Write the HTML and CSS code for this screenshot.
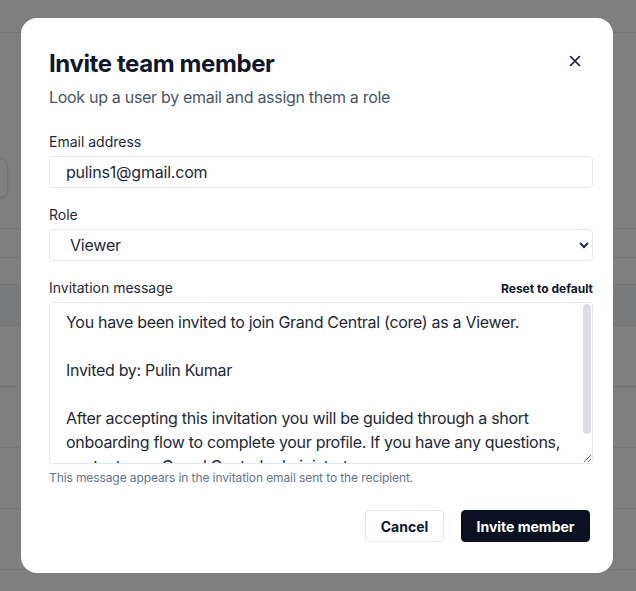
FILE: index.html
```html
<!doctype html>
<html lang="en">
<head>
    <meta charset="UTF-8">
    <meta name="viewport" content="width=device-width, initial-scale=1.0">
    <title>Team members</title>
    <link rel="stylesheet" href="styles.css">
</head>
<body>
    <!-- Страница под модалкой -->
    <div class="page">
        <header class="page-header"></header>
        <div class="toolbar">
            <button class="toolbar-btn"></button>
        </div>
        <div class="side-row"></div>
        <div class="side-row short"></div>
        <div class="table-head"></div>
        <div class="table-row"></div>
        <div class="table-row"></div>
        <div class="table-row"></div>
        <div class="table-row"></div>
    </div>

    <!-- Модальное окно -->
    <div class="overlay">
        <div class="modal">
            <div class="modal-head">
                <div>
                    <h1 class="modal-title">Invite team member</h1>
                    <p class="modal-subtitle">Look up a user by email and assign them a role</p>
                </div>
                <button class="close-btn" aria-label="Close">
                    <svg width="12" height="12" viewBox="0 0 12 12">
                        <path d="M1.5 1.5 L10.5 10.5 M10.5 1.5 L1.5 10.5" stroke="#0f172a" stroke-width="1.6" stroke-linecap="round"/>
                    </svg>
                </button>
            </div>

            <div class="field">
                <label class="field-label" for="email">Email address</label>
                <input class="control" id="email" type="email" value="pulins1@gmail.com">
            </div>

            <div class="field">
                <label class="field-label" for="role">Role</label>
                <select class="control" id="role">
                    <option>Viewer</option>
                    <option>Editor</option>
                    <option>Admin</option>
                </select>
            </div>

            <div class="field">
                <div class="label-row">
                    <label class="field-label" for="message">Invitation message</label>
                    <button class="link-btn">Reset to default</button>
                </div>
                <div class="message-wrap">
                    <textarea class="control message" id="message">You have been invited to join Grand Central (core) as a Viewer.

Invited by: Pulin Kumar

After accepting this invitation you will be guided through a short onboarding flow to complete your profile. If you have any questions, contact your Grand Central administrator.

Welcome aboard!</textarea>
                    <!-- Полоса прокрутки -->
                    <span class="scroll-thumb"></span>
                </div>
                <p class="hint">This message appears in the invitation email sent to the recipient.</p>
            </div>

            <div class="modal-footer">
                <button class="btn btn-secondary">Cancel</button>
                <button class="btn btn-primary">Invite member</button>
            </div>
        </div>
    </div>
</body>
</html>
```

FILE: styles.css
```css
/* Основные стили */
html, body {
    margin: 0;
    padding: 0;
    height: 100%;
    font-family: Inter, "Noto Sans", sans-serif;
    overflow: hidden;
}

/* Страница на фоне */
.page {
    background: #fff;
    height: 100%;
}

.page-header {
    height: 32px;
    border-bottom: 1px solid #e5e7eb;
}

.toolbar {
    padding-top: 125px;
    height: 40px;
}

.toolbar-btn {
    display: block;
    width: 60px;
    height: 40px;
    margin-left: -52px;
    border: 1px solid #e5e7eb;
    border-radius: 8px;
    background: #fff;
    box-shadow: 0 1px 3px rgba(0, 0, 0, 0.12);
}

.side-row {
    height: 30px;
    border-bottom: 1px solid #e5e7eb;
}

.side-row.short {
    height: 28px;
}

.table-head {
    height: 40px;
    margin-top: 26px;
    background: #f3f4f6;
    border-top: 1px solid #e5e7eb;
    border-bottom: 1px solid #e5e7eb;
}

.table-row {
    height: 60px;
    border-bottom: 1px solid #e5e7eb;
}

/* Затемнение */
.overlay {
    position: fixed;
    inset: 0;
    background: rgba(0, 0, 0, 0.5);
    display: flex;
    justify-content: center;
    align-items: flex-start;
}

/* Модалка */
.modal {
    box-sizing: border-box;
    width: 592px;
    margin-top: 18px;
    margin-left: -2px;
    background: #fff;
    border-radius: 16px;
    padding: 30px 20px 31px 28px;
}

.modal-head {
    display: flex;
    justify-content: space-between;
    align-items: flex-start;
    margin-bottom: 23px;
}

.modal-title {
    margin: 0;
    font-size: 24px;
    line-height: 32px;
    font-weight: 700;
    color: #0f172a;
    letter-spacing: -0.4px;
}

.modal-subtitle {
    margin: 5px 0 0;
    font-size: 16px;
    line-height: 24px;
    color: #475569;
    letter-spacing: -0.3px;
}

.close-btn {
    border: none;
    background: none;
    padding: 0;
    margin: 7px 12px 0 0;
    width: 12px;
    height: 12px;
    cursor: pointer;
}

.close-btn svg {
    display: block;
}

/* Поля формы */
.field {
    display: flex;
    flex-direction: column;
    gap: 4px;
    margin-bottom: 17px;
}

.field-label {
    font-size: 14px;
    line-height: 20px;
    color: #1e293b;
}

.label-row {
    display: flex;
    justify-content: space-between;
    align-items: center;
}

.link-btn {
    border: none;
    background: none;
    padding: 0;
    font-family: inherit;
    font-size: 12px;
    font-weight: 700;
    color: #0f172a;
    cursor: pointer;
}

.control {
    box-sizing: border-box;
    width: 100%;
    height: 32px;
    padding: 0 16px;
    border: 1px solid #e2e8f0;
    border-radius: 4px;
    background: #fff;
    font-family: inherit;
    font-size: 16px;
    letter-spacing: -0.2px;
    color: #1e293b;
    outline: none;
}

.message-wrap {
    position: relative;
}

.message {
    display: block;
    height: 162px;
    padding: 7px 26px 7px 16px;
    line-height: 24px;
    letter-spacing: -0.3px;
    resize: vertical;
}

.scroll-thumb {
    position: absolute;
    top: 2px;
    right: 2px;
    width: 8px;
    height: 130px;
    background: #dcdde3;
    border-radius: 4px;
}

.hint {
    margin: 2px 0 0;
    font-size: 12px;
    line-height: 16px;
    color: #64748b;
    letter-spacing: -0.1px;
}

/* Кнопки */
.modal-footer {
    display: flex;
    justify-content: flex-end;
    gap: 17px;
    padding-top: 7px;
    padding-right: 3px;
}

.btn {
    height: 32px;
    padding: 0;
    border-radius: 4px;
    font-family: inherit;
    font-size: 14px;
    font-weight: 700;
    white-space: nowrap;
    cursor: pointer;
}

.btn-secondary {
    background: #fff;
    border: 1px solid #e2e8f0;
    color: #0f172a;
    width: 79px;
}

.btn-primary {
    background: #0a1222;
    border: 1px solid #0a1222;
    color: #fff;
    width: 129px;
}
```
